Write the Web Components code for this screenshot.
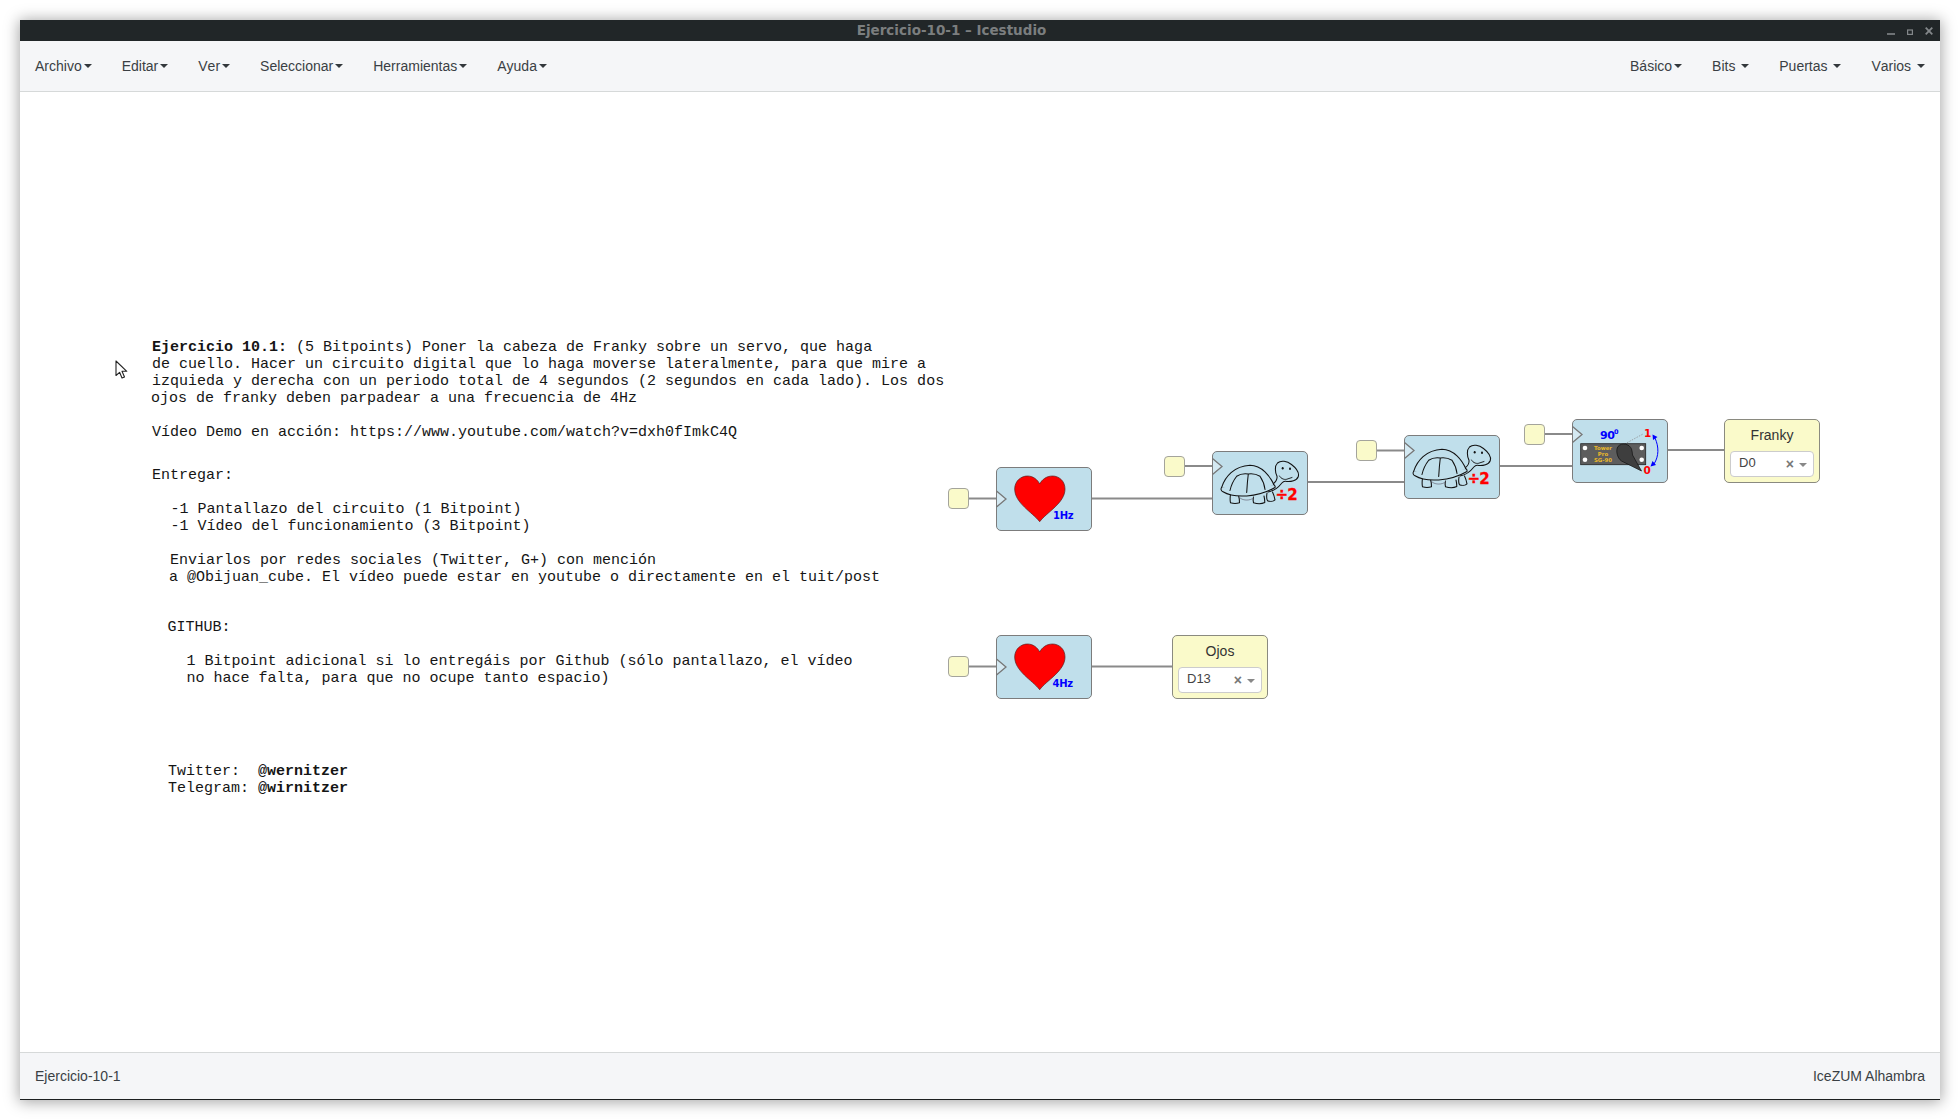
<!DOCTYPE html>
<html lang="es"><head><meta charset="utf-8"><title>Ejercicio-10-1 – Icestudio</title>
<style>
html,body{margin:0;background:#fff;height:100%;overflow:hidden}
body{font-family:"Liberation Sans",Arial,sans-serif;font-size:14px;color:#333}
app-window{margin:20px 20px 0 20px}
</style></head><body>
<app-window>
  <title-bar slot="title">Ejercicio-10-1 – Icestudio</title-bar>
  <menu-bar slot="menu">
    <menu-item>Archivo</menu-item><menu-item>Editar</menu-item><menu-item>Ver</menu-item><menu-item>Seleccionar</menu-item><menu-item>Herramientas</menu-item><menu-item>Ayuda</menu-item>
    <menu-item slot="right">Básico</menu-item><menu-item slot="right" spaced>Bits</menu-item><menu-item slot="right" spaced>Puertas</menu-item><menu-item slot="right" spaced>Varios</menu-item>
  </menu-bar>
  <circuit-canvas slot="canvas"></circuit-canvas>
  <status-bar slot="status"><span>Ejercicio-10-1</span><span slot="right">IceZUM Alhambra</span></status-bar>
</app-window>
<script>
function def(name, html, extra){
  class C extends HTMLElement{
    constructor(){super();this.attachShadow({mode:'open'}).innerHTML=html;}
    connectedCallback(){extra&&extra.call(this,this.shadowRoot);}
  }
  customElements.define(name,C);
}
def('app-window',`<style>
:host{display:flex;flex-direction:column;width:1920px;height:1079px;background:#fff;box-shadow:0 1px 14px 1px rgba(0,0,0,.36);border-bottom:1px solid #1c1f20;box-sizing:content-box}
::slotted([slot=canvas]){flex:1;min-height:0}
</style><slot name="title"></slot><slot name="menu"></slot><slot name="canvas"></slot><slot name="status"></slot>`);

def('title-bar',`<style>
:host{display:flex;align-items:center;justify-content:center;position:relative;height:21px;padding-right:57px;background:#212628;color:#7b7e7f;font:bold 13.5px "DejaVu Sans",sans-serif}
.t{position:relative;top:-1px}
.c{position:absolute;right:7px;top:7px;display:flex;gap:12px;align-items:flex-end}
svg{display:block}
</style><span class="t"><slot></slot></span><div class="c">
<svg width="8" height="7" viewBox="0 0 8 7"><path d="M0 6h8" stroke="#83878a" stroke-width="1.6"/></svg>
<svg width="6" height="6" viewBox="0 0 6 6" style="margin-bottom:.5px"><rect x=".6" y="1" width="4.8" height="4.4" fill="none" stroke="#83878a" stroke-width="1.2"/></svg>
<svg width="8" height="8" viewBox="0 0 8 8"><path d="M.7.7l6.6 6.6M7.3.7L.7 7.3" stroke="#83878a" stroke-width="1.8"/></svg>
</div>`);

def('menu-bar',`<style>
:host{display:flex;justify-content:space-between;height:50px;background:#f5f6f8;border-bottom:1px solid #d6d9d9;box-sizing:content-box}
div{display:flex}
</style><div><slot></slot></div><div><slot name="right"></slot></div>`);

def('menu-item',`<style>
:host{display:flex;align-items:center;padding:0 15px;color:#3a3f44;font:14px "Liberation Sans",Arial,sans-serif;font-kerning:none;white-space:pre}
i{display:inline-block;margin-left:2px;width:0;height:0;border-top:4px solid #33383c;border-left:4px solid transparent;border-right:4px solid transparent}
</style><slot></slot><span id="s"></span><i></i>`,function(r){if(this.hasAttribute('spaced'))r.getElementById('s').textContent=' ';});

def('status-bar',`<style>
:host{display:flex;justify-content:space-between;align-items:center;height:46px;background:#f5f6f8;border-top:1px solid #d6d9d9;padding:0 15px;color:#3a3f44;font:14px "Liberation Sans",Arial,sans-serif}
</style><div><slot></slot></div><div><slot name="right"></slot></div>`);

/* info text */
const LINES=[
 [0,'<b>Ejercicio 10.1:</b> (5 Bitpoints) Poner la cabeza de Franky sobre un servo, que haga',0],
 [0,'de cuello. Hacer un circuito digital que lo haga moverse lateralmente, para que mire a',0],
 [0,'izquieda y derecha con un periodo total de 4 segundos (2 segundos en cada lado). Los dos',0],
 [-1,'ojos de franky deben parpadear a una frecuencia de 4Hz',0],
 [0,'Vídeo Demo en acción: https://www.youtube.com/watch?v=dxh0fImkC4Q',17],
 [0,'Entregar:',26],
 [18.5,'-1 Pantallazo del circuito (1 Bitpoint)',17],
 [18.5,'-1 Vídeo del funcionamiento (3 Bitpoint)',0],
 [18,'Enviarlos por redes sociales (Twitter, G+) con mención',17],
 [17,'a @Obijuan_cube. El vídeo puede estar en youtube o directamente en el tuit/post',0],
 [15.5,'GITHUB:',33],
 [34.5,'1 Bitpoint adicional si lo entregáis por Github (sólo pantallazo, el vídeo',17],
 [34.5,'no hace falta, para que no ocupe tanto espacio)',0],
 [16,'Twitter:  <b>@wernitzer</b>',76],
 [16,'Telegram: <b>@wirnitzer</b>',0]
];
def('info-note',`<style>
:host{display:block;position:absolute;left:132px;top:247px;font:15px/17px "Liberation Mono",monospace;color:#151515;white-space:pre}
div{height:17px}
b{font-weight:bold}
</style><section id="t"></section>`,function(r){
 r.getElementById('t').innerHTML=LINES.map(l=>`<div style="margin-left:${l[0]}px;margin-top:${l[2]}px">${l[1]}</div>`).join('');
});

def('pin-box',`<style>
:host{display:block;position:absolute;width:21px;height:21px;box-sizing:border-box;background:#fafaca;border:1.5px solid #a4a49c;border-radius:4px}
</style>`);

const clock=c=>`<path d="M1 ${c-7} L10 ${c} L1 ${c+7}Z" fill="#d4e9f2"/><path d="M.5 ${c-8} L10 ${c} L.5 ${c+8}" fill="none" stroke="#777" stroke-width="1.300"/>`;
const B='#c0dfeb';
const ICONS={
 heart:(t)=>`<path d="M43.700 54.700C36 45 18.700 36 18.700 22C18.700 14 25 9 31.500 9C37 9 41.500 12.500 43.700 17C46 12.500 50.500 9 56.500 9C63 9 69 14 69 22C69 36 51 45 43.700 54.700Z" fill="#f00" stroke="#5a2020" stroke-width=".7"/>
 <text x="${t=='1Hz'?57:56.500}" y="51.500" font-family="DejaVu Sans" font-weight="bold" font-size="10" fill="#00f" letter-spacing="-.3">${t}</text>`,
 turtle:()=>`<g fill="${B}" stroke="#111" stroke-width="1.050" stroke-linecap="round" stroke-linejoin="round">
 <path d="M18.500 43C18 47 18 50 18.500 51.800C21 52.500 25 52.500 27.500 51.800C27.500 49 27 46 26.500 44.500"/>
 <path d="M41.500 46C41 48 41 50 41.500 51.800C45 52.800 50 52.800 52.800 51.500C52.800 49 52.500 47 52 45"/>
 <path d="M55 42C54.500 45 54.500 48 55.500 49.800C58 50.800 61.500 50.300 63 48.800C62.500 46 61.500 43 60.500 41"/>
 <path d="M27 46C30 50 38 50 41.500 47" fill="none" stroke="#667" stroke-width=".7"/>
 <path d="M61 33C63.500 31 65.500 28.500 65 25.300C63 21 62.500 15 65.500 12C69 9 75 10 79.500 13.500C84 17 87.500 21 86.300 25.500C85 29.500 79 31 73.500 30.300C71 30 70.500 31.500 69 33C66 37 60.500 40 56 41"/>
 <path d="M9.700 36.300C13 26 22 15 38 14.300C50 14.500 58 25 62 34C50 40 24 42 9.700 36.300Z"/>
 <path d="M9.700 36.300C8.500 38 9 39.800 11 40.800C22 47.500 46 46.500 63 36.500C63.500 35 63 34.500 62 34" />
 <path d="M24.700 25.300C21 30 19 35 18 39.500M24.700 25.300C28 23 33 22.500 36.300 23C40 22.500 45 23.500 48 25.300M36.300 23C35.500 29 35 36 34.700 41.500M48 25.300C50.500 29 52.500 34 53 38.500" fill="none"/>
 <path d="M67.500 25C69 28 73 29.300 76 27.800C77.500 27.300 79 26.800 80 26.500" fill="none" stroke-width=".9"/></g>
 <ellipse cx="70.700" cy="17.200" rx="1" ry="1.300" fill="#111"/><ellipse cx="78" cy="17.800" rx="1" ry="1.300" fill="#111"/>
 <text x="63.500" y="48.700" font-family="DejaVu Sans" font-weight="bold" font-size="15" fill="#f00" stroke="#f00" stroke-width=".3" letter-spacing="-.8">÷2</text>`,
 servo:()=>`<path d="M52.700 25L71 15" stroke="#888" stroke-width=".7" stroke-dasharray="1.500 1.200"/>
 <rect x="8.700" y="24.700" width="65" height="21" fill="#5d5d5d" stroke="#222" stroke-width=".8"/>
 <circle cx="13" cy="29" r="2.300" fill="#fff"/><circle cx="13" cy="40.700" r="2.300" fill="#fff"/>
 <circle cx="69.700" cy="29" r="2.300" fill="#fff"/><circle cx="69.700" cy="40.700" r="2.300" fill="#fff"/>
 <g font-family="DejaVu Sans" font-weight="bold" font-size="5.400" fill="#eab92a" text-anchor="middle">
 <text x="31" y="30.600">Tower</text><text x="31" y="36.600">Pro</text><text x="31" y="42.600">SG-90</text></g>
 <path d="M46 27.500C50 23 57.500 25 59.500 30C60 32 60.500 34 60.500 36L69.500 52L49.500 42C45 39 43.500 31 46 27.500Z" fill="#3e3e3e" stroke="#111" stroke-width=".7"/>
 <text x="28" y="20" font-family="DejaVu Sans" font-weight="bold" font-size="11" fill="#00f" letter-spacing="-.3">90</text>
 <text x="42" y="14.500" font-family="DejaVu Sans" font-weight="bold" font-size="6.500" fill="#00f">0</text>
 <text x="72" y="17.800" font-family="DejaVu Sans" font-weight="bold" font-size="10.500" fill="#f00">1</text>
 <text x="71.500" y="55" font-family="DejaVu Sans" font-weight="bold" font-size="10.500" fill="#f00">0</text>
 <path d="M83 19C87 28 87 37 82 45" fill="none" stroke="#00f" stroke-width="1"/>
 <path d="M80.500 15.500L85.500 18L81 21Z M78.500 47.500L84 46L80.500 42Z" fill="#00f"/>`
};
def('logic-block',`<style>
:host{display:block;position:absolute;width:96px;height:64px;box-sizing:border-box}
svg{position:absolute;left:0;top:0;overflow:hidden}
.b{position:absolute;inset:0;background:#c0dfeb;border:1px solid #7c7c7c;border-radius:5px;box-sizing:border-box}
</style><div class="b"></div><svg id="s" width="96" height="64" viewBox="0 0 96 64"></svg>`,function(r){
 const k=this.getAttribute('icon');
 r.getElementById('s').innerHTML=ICONS[k](this.getAttribute('label'))+clock(k=='heart'?32:15.5);
});
def('pin-output',`<style>
:host{display:block;position:absolute;width:96px;height:64px;box-sizing:border-box;background:#fafaca;border:1px solid #8a8a80;border-radius:5px;font:14px "Liberation Sans",Arial,sans-serif;color:#333;text-align:center}
.l{height:31px;line-height:30px}
.s{position:absolute;left:5px;right:5px;top:30.500px;height:26px;box-sizing:border-box;background:#fff;border:1px solid #ccc;border-radius:4px;font-size:13px;line-height:22px;text-align:left;padding-left:8px;color:#444}
.x{position:absolute;right:19px;top:0;font:bold 14px/24px "Liberation Sans",Arial,sans-serif;color:#777}
.a{position:absolute;right:6px;top:11px;width:0;height:0;border-top:4.500px solid #888;border-left:4px solid transparent;border-right:4px solid transparent}
</style><div class="l"><slot></slot></div><div class="s"><span id="v"></span><span class="x">×</span><span class="a"></span></div>`,function(r){
 r.getElementById('v').textContent=this.getAttribute('value');
});

const W=[[968,498.5,996,498.5],[1092,498.5,1212,498.5],[1184,466,1212,466],[1308,482,1404,482],[1376,450.5,1404,450.5],[1500,466,1572,466],[1544,434,1572,434],[1668,450,1724,450],[968,666.5,996,666.5],[1092,666.5,1172,666.5]];
const at=(x,y)=>`left:${x-20}px;top:${y-92}px`;
def('circuit-canvas',`<style>
:host{display:block;position:relative;background:#fff;overflow:hidden}
svg{position:absolute;left:0;top:0}
</style>
<svg id="w" width="1920" height="960" viewBox="0 0 1920 960"></svg>
<info-note></info-note>
<svg width="14" height="20" viewBox="0 0 14 20" style="left:95px;top:268px"><path d="M1 1V15.500L4.600 12.300L7 18L9.500 17L7 11.300H11.800Z" fill="#fff" stroke="#222" stroke-width="1.100" stroke-linejoin="round"/></svg>
<pin-box style="${at(947.5,488)}"></pin-box><logic-block icon="heart" label="1Hz" style="${at(996,467)}"></logic-block>
<pin-box style="${at(1163.5,456)}"></pin-box><logic-block icon="turtle" style="${at(1212,451)}"></logic-block>
<pin-box style="${at(1355.5,440)}"></pin-box><logic-block icon="turtle" style="${at(1404,435)}"></logic-block>
<pin-box style="${at(1524,424)}"></pin-box><logic-block icon="servo" style="${at(1572,419)}"></logic-block>
<pin-output value="D0" style="${at(1724,419)}">Franky</pin-output>
<pin-box style="${at(947.5,656)}"></pin-box><logic-block icon="heart" label="4Hz" style="${at(996,635)}"></logic-block>
<pin-output value="D13" style="${at(1172,635)}">Ojos</pin-output>`,function(r){
 r.getElementById('w').innerHTML=W.map(a=>`<path d="M${a[0]-20} ${a[1]-92}H${a[2]-20}" stroke="#8a8a8a" stroke-width="2"/>`).join('');
});
</script>
</body></html>
